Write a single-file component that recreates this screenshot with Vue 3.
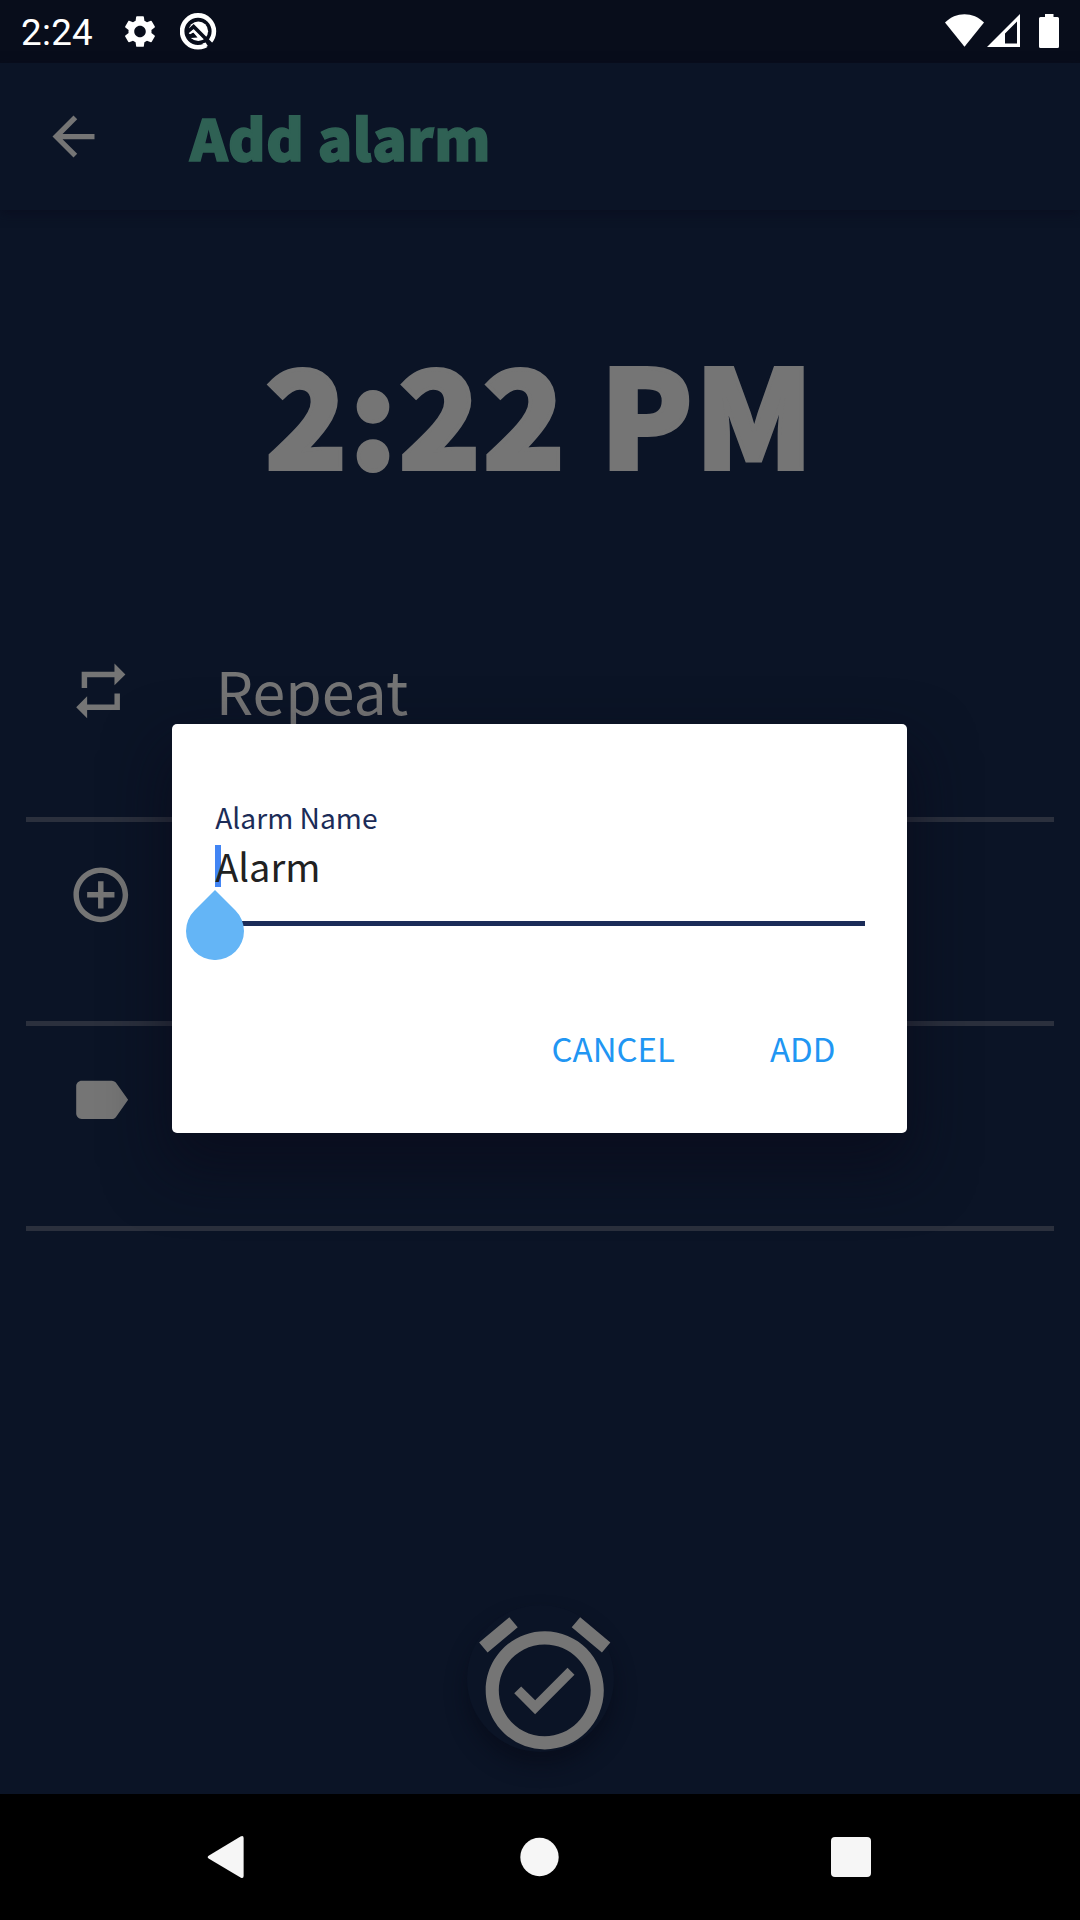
<script setup>
const rows = [
  {
    label: 'Repeat',
    path: 'M7 7h10v3l4-4-4-4v3H5v6h2V7zm10 10H7v-3l-4 4 4 4v-3h12v-6h-2v4z',
  },
  {
    label: '',
    path: 'M13 7h-2v4H7v2h4v4h2v-4h4v-2h-4V7zm-1-5C6.48 2 2 6.48 2 12s4.48 10 10 10 10-4.48 10-10S17.52 2 12 2zm0 18c-4.41 0-8-3.59-8-8s3.59-8 8-8 8 3.59 8 8-3.59 8-8 8z',
  },
  {
    label: '',
    path: 'M17.63 5.84C17.27 5.33 16.67 5 16 5L5 5.01C3.9 5.01 3 5.9 3 7v10c0 1.1.9 1.99 2 1.99L16 19c.67 0 1.27-.33 1.63-.84L22 12l-4.37-6.16z',
  },
]
</script>

<template>
  <div class="screen">
    <header class="status">
      <span class="clock">2:24</span>
      <svg class="gear" viewBox="2 2 20 20">
        <path d="M19.14 12.94c.04-.3.06-.61.06-.94 0-.32-.02-.64-.07-.94l2.03-1.58a.49.49 0 0 0 .12-.61l-1.92-3.32a.488.488 0 0 0-.59-.22l-2.39.96c-.5-.38-1.03-.7-1.62-.94l-.36-2.54a.484.484 0 0 0-.48-.41h-3.84c-.24 0-.43.17-.47.41l-.36 2.54c-.59.24-1.13.57-1.62.94l-2.39-.96c-.22-.08-.47 0-.59.22L2.74 8.87c-.12.21-.08.47.12.61l2.03 1.58c-.05.3-.09.63-.09.94s.02.64.07.94l-2.03 1.58a.49.49 0 0 0-.12.61l1.92 3.32c.12.22.37.29.59.22l2.39-.96c.5.38 1.03.7 1.62.94l.36 2.54c.05.24.24.41.48.41h3.84c.24 0 .44-.17.47-.41l.36-2.54c.59-.24 1.13-.56 1.62-.94l2.39.96c.22.08.47 0 .59-.22l1.92-3.32c.12-.22.07-.47-.12-.61l-2.01-1.58zM12 15.600c-1.980 0-3.600-1.620-3.600-3.600s1.620-3.600 3.600-3.600 3.600 1.620 3.600 3.600-1.620 3.600-3.600 3.600z" />
      </svg>
      <svg class="badge" viewBox="0 0 37 37">
        <circle cx="18" cy="18.300" r="15.900" fill="none" stroke="#fff" stroke-width="4.600" />
        <circle cx="18.300" cy="18.300" r="9.800" />
        <path d="M7 19.500L13.600 13.600L32.500 32.500" fill="none" stroke="#080d1b" stroke-width="3.600" />
        <path d="M7.500 21.500L13.500 19.500L17.500 24.500L10.500 25z" fill="#080d1b" />
        <path d="M10 20.500l3.200-2.600 7.500 7.300" fill="none" stroke="#fff" stroke-width="1.800" />
        <path d="M23 31.500L29.500 35.500L32 33L26 27z" fill="#080d1b" />
        <path d="M22.500 30.500L24.800 34.800L27.800 33L25.600 29.500z" />
      </svg>
      <span class="grow"></span>
      <svg class="wifi" viewBox="0 0 39 33">
        <path d="M0 8.600C10.500-2.600 28.500-2.600 39 8.600L19.500 32.700z" />
      </svg>
      <svg class="signal" viewBox="0 0 33 33">
        <path fill-rule="evenodd" d="M33 0v33H0zM30 7.500L18 19.500V29.500H30z" />
      </svg>
      <svg class="battery" viewBox="0 0 20 34">
        <path d="M6 0h8.500v3H18.500A1.500 1.500 0 0 1 20 4.500V32.500A1.500 1.500 0 0 1 18.500 34H1.500A1.500 1.500 0 0 1 0 32.500V4.500A1.500 1.500 0 0 1 1.500 3H6z" />
      </svg>
    </header>

    <div class="appbar">
      <svg class="back" viewBox="0 0 24 24">
        <path d="M20 11H7.830l5.590-5.590L12 4l-8 8 8 8 1.410-1.410L7.830 13H20v-2z" />
      </svg>
      <h1 class="title">Add alarm</h1>
    </div>

    <main class="content">
      <div class="time">2:22 PM</div>
      <ul class="list">
        <li v-for="(row, i) in rows" :key="i" class="row">
          <svg class="row-icon" viewBox="0 0 24 24"><path :d="row.path" /></svg>
          <span class="row-label">{{ row.label }}</span>
        </li>
      </ul>
      <button class="fab">
        <svg viewBox="0 0 24 24">
          <path d="M22 5.720l-4.600-3.860-1.290 1.530 4.600 3.860L22 5.720zM7.880 3.390L6.600 1.860 2 5.710l1.290 1.530 4.590-3.850zM10.540 14.530L8.410 12.400l-1.060 1.060 3.180 3.180 6-6-1.060-1.060-4.930 4.950zM12 4c-4.970 0-9 4.030-9 9s4.020 9 9 9c4.970 0 9-4.030 9-9s-4.030-9-9-9zm0 16c-3.870 0-7-3.130-7-7s3.130-7 7-7 7 3.130 7 7-3.130 7-7 7z" />
        </svg>
      </button>
    </main>

    <nav class="navbar">
      <svg class="nav-icon" viewBox="0 0 44 44">
        <path d="M5 20.400L36.500 1.400Q39.600 0 39.600 3V41Q39.600 44 36.500 42.400L5 23.800Q2.400 22 5 20.400z" />
      </svg>
      <svg class="nav-icon" viewBox="0 0 44 44"><circle cx="22.500" cy="22" r="19.200" /></svg>
      <svg class="nav-icon" viewBox="0 0 44 44"><rect x="2" y="2" width="40" height="40" rx="4" /></svg>
    </nav>

    <section class="dialog">
      <label class="field-label">Alarm Name</label>
      <div class="field">
        <span class="caret"></span>
        <span class="field-value">Alarm</span>
        <svg class="handle" viewBox="0 0 58 70">
          <path d="M29 0L49.500 20.500A29 29 0 1 1 8.500 20.500z" />
        </svg>
      </div>
      <div class="actions">
        <span class="action">CANCEL</span>
        <span class="action">ADD</span>
      </div>
    </section>
  </div>
</template>

<style>
body {
  margin: 0;
  background: #000;
}
</style>

<style scoped>
.screen {
  position: relative;
  width: 1080px;
  height: 1920px;
  overflow: hidden;
  display: flex;
  flex-direction: column;
  background: #0b1426;
  font-family: "Noto Sans CJK SC", "Noto Sans", sans-serif;
  color: #757575;
}
svg {
  display: block;
  flex: none;
  fill: currentColor;
}
.status {
  height: 63px;
  flex: none;
  box-sizing: border-box;
  display: flex;
  align-items: flex-start;
  padding: 0 21px 0 21px;
  background: #080d1b;
  color: #fff;
}
.clock {
  width: 103px;
  margin-top: 11px;
  font: 36.750px/43px Roboto, sans-serif;
  letter-spacing: 0.3px;
}
.gear {
  width: 32px;
  height: 33px;
  margin-top: 15px;
}
.badge {
  width: 37px;
  height: 37px;
  margin: 13px 0 0 24px;
}
.grow {
  flex: 1;
}
.wifi {
  width: 39px;
  height: 33px;
  margin-top: 14px;
}
.signal {
  width: 33px;
  height: 33px;
  margin: 14px 0 0 3px;
}
.battery {
  width: 20px;
  height: 34px;
  margin: 14px 0 0 19px;
}
.appbar {
  height: 147px;
  flex: none;
  display: flex;
  align-items: center;
  padding-left: 42px;
  background: #0b1426;
  box-shadow: 0 3px 10px rgba(10, 13, 30, 0.8);
}
.back {
  width: 63px;
  height: 63px;
}
.title {
  margin: -2px 0 0 85px;
  font-size: 57px;
  line-height: 88px;
  font-weight: 900;
  letter-spacing: 0.5px;
  -webkit-text-stroke: 1.600px #2f6154;
  color: #2f6154;
  white-space: nowrap;
}
.content {
  flex: 1;
  display: flex;
  flex-direction: column;
  align-items: center;
}
.time {
  height: 406.750px;
  box-sizing: border-box;
  padding-top: 95.500px;
  font-size: 135px;
  line-height: 208px;
  font-weight: 900;
  letter-spacing: 2px;
  -webkit-text-stroke: 4px #757575;
  white-space: nowrap;
}
.list {
  align-self: stretch;
  margin: 0 26px;
  padding: 0;
  list-style: none;
}
.row {
  display: flex;
  height: 199.750px;
  border-bottom: 5px solid #2b303d;
  padding-left: 42.200px;
}
.row-icon {
  width: 65.600px;
  height: 65.600px;
  margin-top: 40.900px;
}
.row-label {
  margin: 29px 0 0 82px;
  font-size: 59px;
  line-height: 88px;
}
.fab {
  width: 147px;
  height: 147px;
  margin-top: 373.800px;
  padding: 0;
  border: 0;
  border-radius: 50%;
  background: #0b1426;
  color: inherit;
  box-shadow: 0 13px 20px rgba(7, 10, 24, 0.6);
}
.fab svg {
  width: 157.500px;
  height: 157.500px;
  margin-left: -0.500px;
}
.navbar {
  height: 126px;
  flex: none;
  display: flex;
  align-items: center;
  justify-content: space-between;
  padding: 0 207px 0 204px;
  background: #000;
  color: #f6f6f6;
}
.nav-icon {
  width: 44px;
  height: 44px;
}
.dialog {
  position: absolute;
  left: 172.400px;
  top: 723.700px;
  width: 735px;
  height: 409.600px;
  box-sizing: border-box;
  padding: 71px 42px 0 42.800px;
  border-radius: 5px;
  background: #fff;
  box-shadow: 0 30px 60px 6px rgba(9, 11, 26, 0.65);
}
.field-label {
  display: block;
  font-size: 28.200px;
  line-height: 43px;
  color: #1b2c58;
}
.field {
  position: relative;
  height: 83px;
  border-bottom: 5px solid #1b2c58;
}
.field-value {
  position: relative;
  top: -2px;
  display: block;
  font-size: 38px;
  line-height: 60px;
  color: #212121;
}
.caret {
  position: absolute;
  left: 0;
  top: 7px;
  width: 6px;
  height: 42px;
  background: #4285f4;
}
.handle {
  position: absolute;
  left: -29px;
  top: 52px;
  width: 58px;
  height: 70px;
  color: #64b5f6;
}
.actions {
  display: flex;
  justify-content: flex-end;
  gap: 95px;
  margin-top: 98px;
  padding-right: 30px;
  font-size: 33px;
  line-height: 49px;
  color: #2196f3;
}
</style>
